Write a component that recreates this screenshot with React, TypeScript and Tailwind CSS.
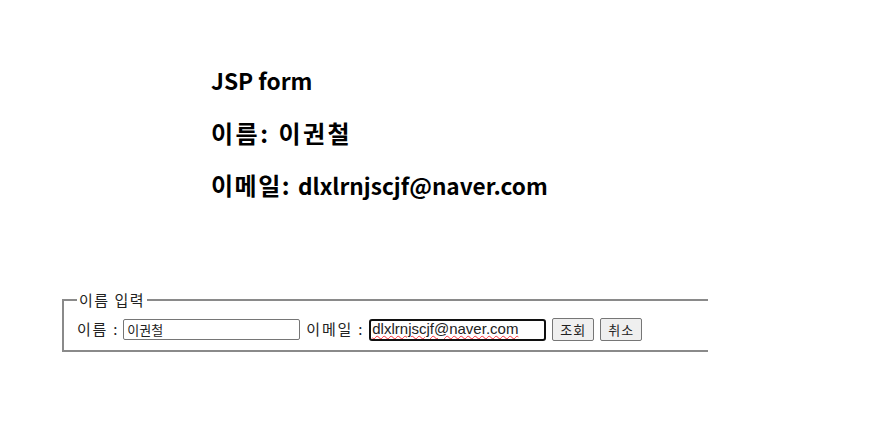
import React from 'react';

const App: React.FC = () => {
    return (
        <div className="min-h-[440px] bg-white text-black font-['Noto_Sans_CJK_KR','Noto_Sans',sans-serif]">
            <div className="pl-[211px] pt-[65px]">
                <h2 className="text-[22.7px] font-bold leading-[32px]">JSP form</h2>
                <h2 className="mt-[20px] text-[24px] font-bold leading-[32px] tracking-[2.5px]">
                    이름: 이권철
                </h2>
                <h2 className="mt-[20px] text-[24px] font-bold leading-[32px]">
                    <span className="tracking-[1.5px]">이메일: </span>
                    <span className="text-[22.6px]">dlxlrnjscjf@naver.com</span>
                </h2>
            </div>
            <fieldset className="ml-[62px] mt-[88px] w-[646px] border-2 border-r-0 border-[#8a8a8a] pl-[13px] pb-[9px]">
                <legend className="px-[2px] text-[15px] leading-[20px] tracking-[1.5px] text-[#222]">이름 입력</legend>
                <div className="mt-[8px] flex items-center text-[15px] tracking-[1.8px] text-[#222]">
                    <span>이름 :</span>
                    <input
                        type="text"
                        defaultValue="이권철"
                        className="ml-[4px] h-[21px] w-[177px] rounded-[2px] border border-[#767676] px-[3px] text-[13px] tracking-normal font-['Noto_Sans_CJK_KR',sans-serif] outline-none"
                    />
                    <span className="ml-[6px]">이메일 :</span>
                    <input
                        type="text"
                        defaultValue="dlxlrnjscjf@naver.com"
                        className="ml-[5px] h-[22px] w-[177px] rounded-[3px] border-2 border-[#101010] px-[1px] text-[15px] tracking-normal font-['Liberation_Sans',sans-serif] outline-none underline decoration-wavy decoration-red-500 decoration-1"
                    />
                    <button className="ml-[6px] h-[23px] w-[42px] rounded-[2px] border border-[#767676] bg-[#efefef] text-[13px] tracking-[1px]">조회</button>
                    <button className="ml-[6px] h-[23px] w-[42px] rounded-[2px] border border-[#767676] bg-[#efefef] text-[13px] tracking-[1px]">취소</button>
                </div>
            </fieldset>
        </div>
    );
};

export default App;
